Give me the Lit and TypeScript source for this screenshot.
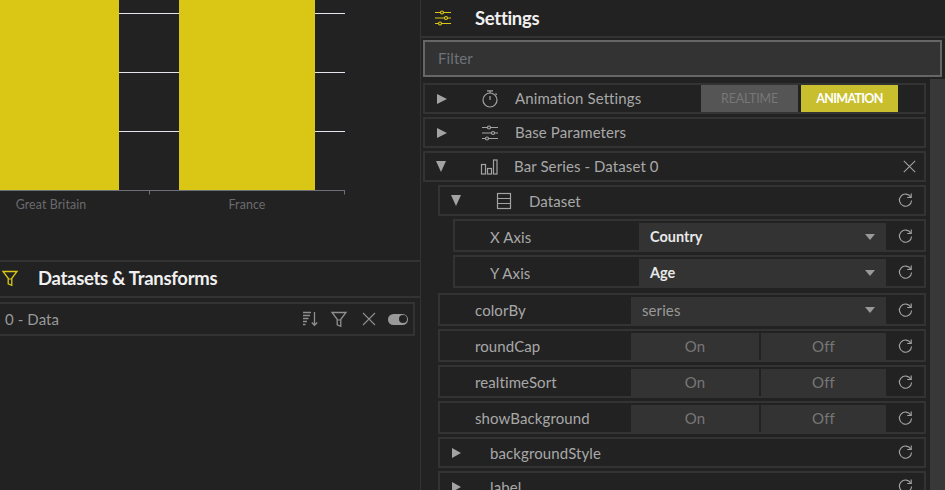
import { LitElement, html, css, svg } from 'lit';
import { customElement } from 'lit/decorators.js';

const stroke = '#a3a3a3';

// icons, all drawn on a 20x20 box
const sliders = (c: string) => svg`
  <g fill="none" stroke=${c} stroke-width="1.2">
    <path d="M2 4.5h5.5M10.5 4.5h7.5M2 10h9.5M14.5 10h3.5M2 15.5h3.5M8.5 15.5h9.5"/>
    <circle cx="9" cy="4.5" r="1.5"/><circle cx="13" cy="10" r="1.5"/><circle cx="7" cy="15.5" r="1.5"/>
  </g>`;
const timer = svg`
  <g fill="none" stroke=${stroke} stroke-width="1.2">
    <circle cx="10" cy="11" r="7"/>
    <path d="M7 1.8h6M10 2v2M10 11V7M15.5 4.5l1.3 1.3"/>
  </g>`;
const bars = svg`
  <g fill="none" stroke=${stroke} stroke-width="1.2">
    <rect x="2.5" y="7.5" width="4" height="9.5"/><rect x="8.5" y="11.5" width="4" height="5.5"/><rect x="14.5" y="3" width="3.5" height="14"/>
  </g>`;
const table = svg`
  <g fill="none" stroke=${stroke} stroke-width="1.2">
    <rect x="3.5" y="2.5" width="13" height="15"/><path d="M3.5 7.5h13M3.5 12.5h13"/>
  </g>`;
const reset = svg`
  <g fill="none" stroke=${stroke} stroke-width="1.2">
    <path d="M15.6 6.5A6.4 6.4 0 1 0 16.4 10"/>
    <path d="M16 2.6V6.8H11.8"/>
  </g>`;
const close = (c: string) => svg`<path d="M4 4l12 12M16 4L4 16" fill="none" stroke=${c} stroke-width="1.1"/>`;
const funnel = (c: string) => svg`
  <path d="M3 3.5h14l-5.2 6.8v7l-3.6-1.4v-5.6z" fill="none" stroke=${c} stroke-width="1.3"/>
  <path d="M8.2 11h3.6" stroke=${c} stroke-width="1"/>`;
const sortIcon = svg`
  <g fill="none" stroke="#8f8f8f" stroke-width="1.3">
    <path d="M4 3.5h8M4 6.5h7M4 9.5h5.5M4 12.5h4M4 15.5h2.5"/>
    <path d="M15.5 3v13M12.8 13.5l2.7 2.8 2.7-2.8"/>
  </g>`;

const icon = (body: unknown, cls = '') => html`<svg class="icon ${cls}" viewBox="0 0 20 20">${body}</svg>`;

@customElement('app-root')
export class AppRoot extends LitElement {
  static styles = css`
    :host {
      display: flex;
      width: 945px;
      height: 490px;
      overflow: hidden;
      background: #222;
      color: #a8a8a8;
      font-family: "Lato", "Liberation Sans", sans-serif;
      font-size: 15px;
      letter-spacing: 0.1px;
    }
    .left {
      width: 420px;
      flex: none;
      border-right: 1px solid #333;
      box-sizing: content-box;
      display: flex;
      flex-direction: column;
    }
    .chart { display: block; width: 420px; height: 260px; flex: none; }
    .chart text { font: 12.4px "Lato", sans-serif; fill: #6a6a6e; text-anchor: middle; }
    .pane-head {
      display: flex;
      align-items: center;
      height: 36px;
      flex: none;
      box-sizing: border-box;
      border-top: 2px solid #333;
      border-bottom: 2px solid #333;
      color: #f0f0f0;
      font-size: 18.5px;
      font-weight: 700;
      letter-spacing: -0.3px;
    }
    .left .pane-head { height: 38px; padding-left: 38px; padding-bottom: 2px; position: relative; }
    .left .pane-head .icon { position: absolute; left: 0; top: 6px; }
    .data-row {
      display: flex;
      align-items: center;
      margin: 4px 5px 0 0;
      height: 34px;
      box-sizing: border-box;
      border: 2px solid #333;
      border-left: none;
      padding: 0 5px;
      color: #999;
    }
    .data-row span { flex: 1; }
    .data-row .icon { margin-left: 10px; }
    .toggle {
      width: 20px;
      height: 11px;
      margin-left: 9px;
      border-radius: 6px;
      background: #999;
      position: relative;
    }
    .toggle::after {
      content: "";
      position: absolute;
      right: 1.5px;
      top: 1.5px;
      width: 8px;
      height: 8px;
      border-radius: 50%;
      background: #222;
    }
    .right {
      flex: 1;
      min-width: 0;
      position: relative;
      display: flex;
      flex-direction: column;
    }
    .right .pane-head { padding-left: 12px; border-top: none; height: 38px; }
    .right .pane-head span { margin-left: 22px; }
    .filter {
      margin: 2px 3px 0 2px;
      height: 37px;
      box-sizing: border-box;
      border: 2px solid #666;
      background: #333;
      color: #6d7278;
      display: flex;
      align-items: center;
      padding: 0 0 2px 13px;
      flex: none;
    }
    .scrollbar {
      position: absolute;
      right: 0;
      top: 79px;
      bottom: 0;
      width: 15px;
      background: #383838;
    }
    .list {
      width: 503px;
      margin: 6px 0 0 2px;
      display: flex;
      flex-direction: column;
      gap: 3px;
    }
    .row {
      display: flex;
      align-items: center;
      box-sizing: border-box;
      height: 31px;
      border: 2px solid #333;
      flex: none;
    }
    .row.l1 { margin-left: 15px; }
    .row.l2 { margin-left: 30px; }
    .row.field { height: 33px; align-items: stretch; padding-top: 2px; }
    .row.first { margin-top: 2px; }
    .tri { flex: none; margin-left: 12px; width: 0; height: 0; }
    .tri.closed { border-left: 10px solid #a3a3a3; border-top: 5.5px solid transparent; border-bottom: 5.5px solid transparent; }
    .tri.open { border-top: 11px solid #a3a3a3; border-left: 5.5px solid transparent; border-right: 5.5px solid transparent; margin-left: 11px; }
    .tri.small { border-left-width: 9px; border-top-width: 5px; border-bottom-width: 5px; }
    .icon { width: 20px; height: 20px; flex: none; display: block; }
    .row > .icon.lead { margin-left: 33px; margin-right: 15px; }
    .row .name { flex: 1; white-space: nowrap; }
    .row .name.up { margin-top: -2px; }
    .row .bare { margin-left: 29px; }
    .field .name { align-self: center; padding-left: 35px; margin-top: -2px; }
    .field.l2 .name { margin-top: 0; }
    .field .select, .field .switch { flex: none; width: 255px; }
    .field.l2 .select { width: 247px; }
    .select {
      display: flex;
      align-items: center;
      justify-content: space-between;
      background: #333;
      padding: 0 11px 2px;
      box-sizing: border-box;
      color: #999;
    }
    .select.strong { color: #e8e8e8; font-weight: 700; font-size: 14.5px; letter-spacing: 0; padding-bottom: 0; }
    .select i {
      border-top: 6px solid #999;
      border-left: 5px solid transparent;
      border-right: 5px solid transparent;
    }
    .switch { display: flex; gap: 2px; }
    .switch div {
      flex: 128;
      display: flex;
      align-items: center;
      justify-content: center;
      background: #333;
      color: #777;
      padding-bottom: 2px;
    }
    .switch div + div { flex: 125; }
    .reset {
      flex: none;
      width: 38px;
      display: flex;
      align-items: center;
      justify-content: center;
      align-self: center;
      margin-left: auto;
    }
    .reset .icon { width: 19px; height: 19px; }
    .reset.remove { padding-left: 8px; box-sizing: border-box; }
    .modes {
      display: flex;
      gap: 3px;
      margin-right: 26px;
      align-self: stretch;
    }
    .modes div {
      width: 97px;
      display: flex;
      align-items: center;
      justify-content: center;
      font-size: 12.5px;
      letter-spacing: -0.2px;
    }
    .modes .off { background: #555; color: #777; }
    .modes .on { background: #c9bf2e; color: #fff; font-weight: 700; letter-spacing: -0.7px; }
  `;

  renderField(name: string, control: unknown, level = 'l1', extra = '') {
    return html`<div class="row field ${level} ${extra}">
      <span class="name">${name}</span>
      ${control}
      <div class="reset">${icon(reset)}</div>
    </div>`;
  }

  renderSwitch() {
    return html`<div class="switch"><div>On</div><div>Off</div></div>`;
  }

  render() {
    return html`
      <div class="left">
        <svg class="chart" viewBox="0 0 420 260">
          <path d="M119 13.5h60M119 72.5h60M119 131.5h60M315 13.5h30M315 72.5h30M315 131.5h30" stroke="#e4e4ee" stroke-width="1"/>
          <rect x="-1" y="0" width="120" height="190" fill="#dac715"/>
          <rect x="179" y="0" width="136" height="190" fill="#dac715"/>
          <path d="M0 190.5h345M149.5 190v4.5M344.5 190v4.5" stroke="#6e7079" stroke-width="1" fill="none"/>
          <text x="51" y="209">Great Britain</text>
          <text x="247" y="209">France</text>
        </svg>
        <div class="pane-head">${icon(funnel('#dac715'))}<span>Datasets &amp; Transforms</span></div>
        <div class="data-row">
          <span>0 - Data</span>
          ${icon(sortIcon)}
          ${icon(funnel('#8f8f8f'))}
          ${icon(close('#8f8f8f'))}
          <div class="toggle"></div>
        </div>
      </div>
      <div class="right">
        <div class="pane-head">${icon(sliders('#dac715'))}<span>Settings</span></div>
        <div class="filter">Filter</div>
        <div class="scrollbar"></div>
        <div class="list">
          <div class="row">
            <div class="tri closed"></div>${icon(timer, 'lead')}
            <span class="name up">Animation Settings</span>
            <div class="modes"><div class="off">REALTIME</div><div class="on">ANIMATION</div></div>
          </div>
          <div class="row">
            <div class="tri closed"></div>${icon(sliders(stroke), 'lead')}
            <span class="name up">Base Parameters</span>
          </div>
          <div class="row">
            <div class="tri open"></div>${icon(bars, 'lead')}
            <span class="name up">Bar Series - Dataset 0</span>
            <div class="reset remove">${icon(close(stroke))}</div>
          </div>
          <div class="row l1">
            <div class="tri open"></div>${icon(table, 'lead')}
            <span class="name">Dataset</span>
            <div class="reset">${icon(reset)}</div>
          </div>
          ${this.renderField('X Axis', html`<div class="select strong">Country<i></i></div>`, 'l2')}
          ${this.renderField('Y Axis', html`<div class="select strong">Age<i></i></div>`, 'l2')}
          ${this.renderField('colorBy', html`<div class="select">series<i></i></div>`, 'l1', 'first')}
          ${this.renderField('roundCap', this.renderSwitch())}
          ${this.renderField('realtimeSort', this.renderSwitch())}
          ${this.renderField('showBackground', this.renderSwitch())}
          <div class="row l1 sub">
            <div class="tri closed small"></div>
            <span class="name bare">backgroundStyle</span>
            <div class="reset">${icon(reset)}</div>
          </div>
          <div class="row l1 sub">
            <div class="tri closed small"></div>
            <span class="name bare">label</span>
            <div class="reset">${icon(reset)}</div>
          </div>
        </div>
      </div>
    `;
  }
}
